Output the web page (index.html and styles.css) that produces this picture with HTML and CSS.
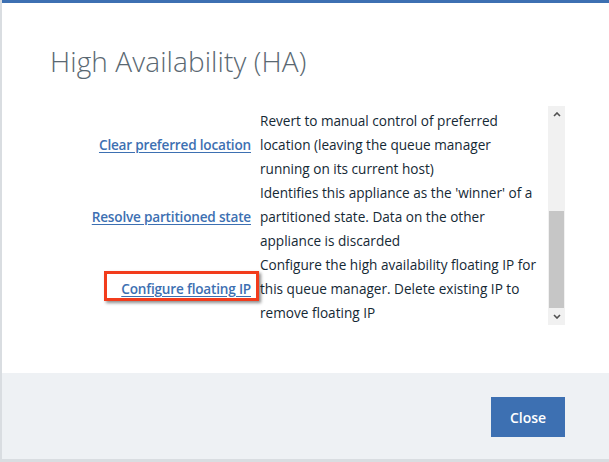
FILE: index.html
```html
<!DOCTYPE html>
<html lang="en">
<head>
<meta charset="utf-8">
<title>High Availability (HA)</title>
<link rel="stylesheet" href="styles.css">
</head>
<body>
<div class="modal">
  <header class="modal-header">
    <h2 class="modal-title">High Availability (HA)</h2>
  </header>
  <div class="modal-body">
    <div class="scroll-pane">
      <div class="actions">
        <div class="action-cell"><a class="action-link" href="#">Clear preferred location</a></div>
        <div class="action-desc">Revert to manual control of preferred location (leaving the queue manager running on its current host)</div>
        <div class="action-cell"><a class="action-link" href="#">Resolve partitioned state</a></div>
        <div class="action-desc">Identifies this appliance as the 'winner' of a partitioned state. Data on the other appliance is discarded</div>
        <div class="action-cell"><a class="action-link is-highlighted" href="#">Configure floating IP</a></div>
        <div class="action-desc">Configure the high availability floating IP for this queue manager. Delete existing IP to remove floating IP</div>
      </div>
      <div class="scrollbar">
        <div class="sb-btn">
          <svg width="8" height="5" viewBox="0 0 8 5"><path d="M1 4 L4 1 L7 4" fill="none" stroke="#505050" stroke-width="1.6"/></svg>
        </div>
        <div class="sb-track"><div class="sb-thumb"></div></div>
        <div class="sb-btn">
          <svg width="8" height="5" viewBox="0 0 8 5"><path d="M1 1 L4 4 L7 1" fill="none" stroke="#505050" stroke-width="1.6"/></svg>
        </div>
      </div>
    </div>
  </div>
  <footer class="modal-footer">
    <button class="btn-primary" type="button">Close</button>
  </footer>
</div>
</body>
</html>
```
FILE: styles.css
```css
html, body {
  margin: 0;
  padding: 0;
}
body {
  background: #d9dde1;
  font-family: "Open Sans", "Noto Sans", sans-serif;
  height: 462px;
  overflow: hidden;
}
.modal {
  margin-left: 2px;
  width: 607px;
  height: 459px;
  box-sizing: border-box;
  background: #ffffff;
  border-top: 3px solid #3d70b2;
  display: flex;
  flex-direction: column;
}
.modal-header {
  padding: 40px 44px 0 48px;
}
.modal-title {
  margin: 0;
  font-size: 28px;
  font-weight: 300;
  line-height: 36px;
  color: #5a6872;
  letter-spacing: 0.1px;
}
.modal-body {
  padding: 27px 44px 48px 46px;
}
.scroll-pane {
  display: flex;
  height: 219px;
}
.actions {
  flex: 1;
  display: grid;
  grid-template-columns: 203px 1fr;
  column-gap: 9px;
  align-content: start;
  padding: 3px 8px 0 0;
  overflow: hidden;
  font-size: 13.6px;
  line-height: 24px;
  color: #152935;
}
.action-cell {
  display: flex;
  align-items: center;
  justify-content: flex-end;
}
.action-link {
  position: relative;
  display: inline-block;
  color: #3d70b2;
  font-weight: 600;
  letter-spacing: -0.2px;
  text-decoration: underline;
  text-underline-offset: 2px;
}
.action-link.is-highlighted::after {
  content: "";
  position: absolute;
  left: -17px;
  right: -8px;
  top: -6px;
  height: 30px;
  box-sizing: border-box;
  border: 3px solid #f23c1c;
  box-shadow: 2px 2px 3px rgba(0, 0, 0, 0.45);
}
.scrollbar {
  width: 17px;
  display: flex;
  flex-direction: column;
  background: #f1f1f1;
}
.sb-btn {
  height: 17px;
  display: flex;
  align-items: center;
  justify-content: center;
}
.sb-track {
  flex: 1;
  display: flex;
  flex-direction: column;
  justify-content: flex-end;
}
.sb-thumb {
  height: 97px;
  margin: 0 1px;
  background: #c6c6c6;
}
.modal-footer {
  flex: 1;
  background: #eef1f4;
  display: flex;
  justify-content: flex-end;
  align-items: flex-start;
  padding: 24px 44px 0 0;
}
.btn-primary {
  width: 74px;
  height: 40px;
  background: #3d70b2;
  color: #ffffff;
  border: 0;
  font-family: "Open Sans", "Noto Sans", sans-serif;
  font-size: 14px;
  font-weight: 600;
  padding: 0;
}
```
